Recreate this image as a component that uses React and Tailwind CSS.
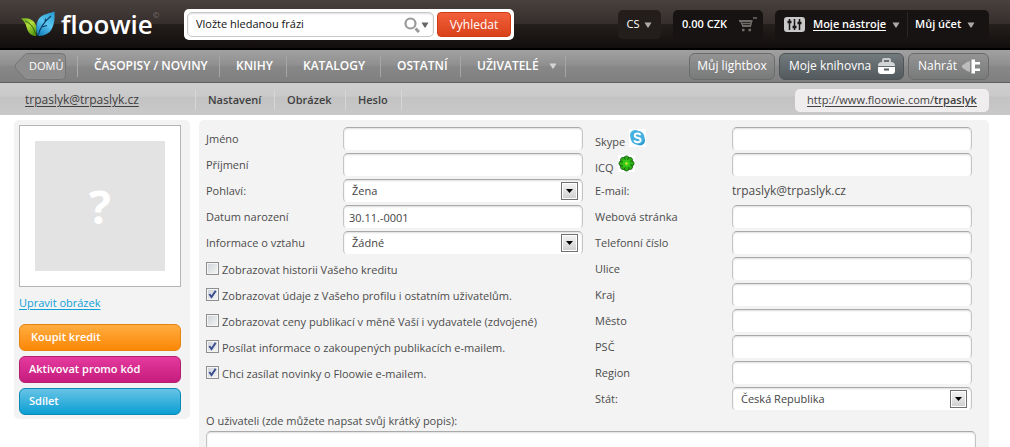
const navItems = [
  { label: "ČASOPISY / NOVINY", width: "w-[142px]" },
  { label: "KNIHY", width: "w-[67px]" },
  { label: "KATALOGY", width: "w-[94px]" },
  { label: "OSTATNÍ", width: "w-[80px]" },
  { label: "UŽIVATELÉ", width: "w-[105px]", menu: true },
];

const tabs = [
  { label: "Nastavení", width: "w-[79px]" },
  { label: "Obrázek", width: "w-[71px]" },
  { label: "Heslo", width: "w-[56px]" },
];

const options = [
  { id: "credit", label: "Zobrazovat historii Vašeho kreditu", checked: false },
  { id: "public", label: "Zobrazovat údaje z Vašeho profilu i ostatním uživatelům.", checked: true },
  { id: "prices", label: "Zobrazovat ceny publikací v měně Vaší i vydavatele (zdvojené)", checked: false },
  { id: "bought", label: "Posílat informace o zakoupených publikacích e-mailem.", checked: true },
  { id: "news", label: "Chci zasílat novinky o Floowie e-mailem.", checked: true },
];

const fieldClass =
  "h-[24px] w-full rounded-[5px] border border-t-[#aaaaaa] border-x-[#c4c4c4] border-b-[#f3f3f3] bg-white text-[11px] text-[#444444] shadow-[inset_0_1px_2px_#dddddd] outline-none";

function Caret({ className }) {
  return (
    <svg viewBox="0 0 8 6" className={`h-[6px] w-[8px] shrink-0 ${className}`} fill="currentColor" aria-hidden="true">
      <path d="M0.500 0.500h7L4.500 5.500h-1z" />
    </svg>
  );
}

function Logo() {
  return (
    <a href="#" className="flex w-[170px] items-center pl-[7px] text-white" aria-label="floowie">
      <svg viewBox="0 0 34 26" className="h-[26px] w-[34px] shrink-0" aria-hidden="true">
        <defs>
          <linearGradient id="green" x1="0" y1="0" x2="0.6" y2="1">
            <stop offset="0" stopColor="#6fae1e" />
            <stop offset="0.5" stopColor="#b2dc3c" />
            <stop offset="1" stopColor="#5c9d12" />
          </linearGradient>
          <linearGradient id="blue" x1="0.8" y1="0" x2="0.3" y2="1">
            <stop offset="0" stopColor="#2a9fd6" />
            <stop offset="0.5" stopColor="#5cc6f0" />
            <stop offset="1" stopColor="#1583c0" />
          </linearGradient>
        </defs>
        <path d="M0 7.500C7 6.500 12 8 14.500 13C16 16.500 15.500 21 15 25C9.500 24.500 7 22 5.500 16C4.500 12 2.500 9.500 0 7.500Z" fill="url(#green)" />
        <path d="M4 10C9 12 13 16 14.500 23.500" fill="none" stroke="#2c5d10" strokeWidth="1" />
        <path d="M33.500 0.500C34 9 33 17 28 21.500C25 24 21 25 17 25C14.500 19 14.500 11 19 6.500C23 3 28 2.500 33.500 0.500Z" fill="url(#blue)" />
        <path d="M30 5C24 10 19 16 17 25M24 11L24.500 7.500M20.500 16L26 14.500" fill="none" stroke="#0d3f66" strokeWidth="1.100" />
      </svg>
      <span className="ml-[6px] text-[26px] leading-[26px] font-semibold">floowie</span>
      <span className="mb-[18px] text-[8px] leading-[8px] text-[#7a716d]">©</span>
    </a>
  );
}

function TopBar() {
  return (
    <header className="flex h-[50px] items-start border-b-2 border-black bg-[linear-gradient(#4a413e_0%,#352e2c_50%,#241f1d_50%,#120e0d_100%)] pr-[21px] pl-[14px] whitespace-nowrap">
      <div className="flex h-[47px] items-center">
        <Logo />
      </div>
      <form className="mt-[9px] flex h-[31px] w-[330px] gap-[3px] rounded-[5px] bg-white p-[3px]">
        <div className="flex min-w-0 flex-1 items-center rounded-[5px] border border-[#c9c9c9] pr-[4px] shadow-[inset_0_1px_2px_#dddddd]">
          <input
            aria-label="Hledat"
            defaultValue="Vložte hledanou frázi"
            className="min-w-0 flex-1 pl-[8px] text-[11px] text-[#111111] outline-none"
          />
          <svg viewBox="0 0 16 16" className="h-[16px] w-[16px]" fill="none" stroke="#999999" aria-hidden="true">
            <circle cx="6.500" cy="6.500" r="5" strokeWidth="2.200" />
            <path d="M11.500 11.500l3.500 3.500" strokeWidth="3" />
          </svg>
          <Caret className="ml-[1px] text-[#666666]" />
        </div>
        <button
          type="button"
          className="w-[74px] rounded-[4px] border border-[#cf3c14] bg-[linear-gradient(#f2603c,#d9421a)] text-[12px] font-medium text-white"
        >
          Vyhledat
        </button>
      </form>
      <div className="mt-[10px] ml-auto flex h-[29px] gap-[12px] text-[11px] font-semibold text-white">
        <button type="button" className="flex w-[43px] items-center justify-center gap-[5px] rounded-[5px] bg-[#231e1c] font-medium">
          CS <Caret className="text-[#aaaaaa]" />
        </button>
        <a href="#" className="flex w-[90px] items-center justify-between rounded-[5px] bg-[#171312] pr-[6px] pl-[9px]">
          0.00 CZK
          <svg viewBox="0 0 18 15" className="h-[15px] w-[18px]" fill="none" stroke="#6f6b69" aria-hidden="true">
            <path d="M18 1h-4" strokeWidth="1.500" />
            <path d="M0 4h13.500M3 9h9" strokeWidth="2" />
            <path d="M1.500 4l2.500 5M12.500 4l-1 5M3 6.500h9" strokeWidth="1.500" />
            <path d="M3 13h2.500M9.500 13h2.500" strokeWidth="2.500" />
          </svg>
        </a>
        <div className="flex w-[214px] items-center rounded-[5px] bg-[#171312] pl-[9px]">
          <svg viewBox="0 0 21 15" className="h-[15px] w-[21px]" aria-hidden="true">
            <rect width="21" height="15" rx="3" fill="#c9c9c9" />
            <path d="M5.500 2v11M10.500 2v11M15.500 2v11" stroke="#1a1615" strokeWidth="1.500" />
            <path d="M3.500 5h4M8.500 10h4M13.500 6h4" stroke="#1a1615" strokeWidth="2.500" />
          </svg>
          <a href="#" className="ml-[8px] underline underline-offset-2">Moje nástroje</a>
          <Caret className="ml-[6px] text-[#aaaaaa]" />
          <span className="mx-[7px] h-[25px] w-px bg-[#2b2624]" />
          <button type="button" className="flex items-center gap-[6px]">
            Můj účet <Caret className="text-[#aaaaaa]" />
          </button>
        </div>
      </div>
    </header>
  );
}

function NavBar() {
  const button = "flex h-[27px] items-center rounded-[6px] border text-[12px] font-medium";
  return (
    <nav className="flex h-[33px] items-center border-b border-[#5e5e5e] bg-[linear-gradient(#a1a1a1_0%,#8f8f8f_48%,#888888_50%,#7e7f7e_100%)] pr-[21px] pl-[14px] whitespace-nowrap text-white">
      <a href="#" className="grid h-[27px] w-[53px] items-center text-[11px]">
        <svg viewBox="0 0 53 27" className="col-start-1 row-start-1 h-[27px] w-[53px]" fill="#8d8d8d" stroke="#747474" aria-hidden="true">
          <path d="M13.500 0.500H47.500Q51.500 0.500 51.500 4.500V22.500Q51.500 26.500 47.500 26.500H13.500Q11.500 26.500 10.500 25L1.500 15.500Q0.500 13.500 1.500 11.500L10.500 2Q11.500 0.500 13.500 0.500Z" />
        </svg>
        <span className="col-start-1 row-start-1 pl-[15px]">DOMŮ</span>
      </a>
      <ul className="ml-[10px] flex border-l border-[#aaaaaa]">
        {navItems.map((item) => (
          <li key={item.label} className={`${item.width} flex h-[22px] items-center border-r border-[#a6a6a6] pl-[16px]`}>
            <a href="#" className="flex items-center gap-[10px] text-[12px] font-semibold">
              {item.label}
              {item.menu && <Caret className="text-[#d5d5d5]" />}
            </a>
          </li>
        ))}
      </ul>
      <div className="ml-auto flex gap-[4px]">
        <button type="button" className={`${button} w-[86px] justify-center border-[#6b6b6b] bg-[linear-gradient(#939393,#787a79)]`}>
          Můj lightbox
        </button>
        <button type="button" className={`${button} w-[125px] justify-between border-[#4f5457] bg-[linear-gradient(#737a7e,#535a5e)] pr-[8px] pl-[9px]`}>
          Moje knihovna
          <svg viewBox="0 0 17 16" className="h-[16px] w-[17px]" aria-hidden="true">
            <path d="M5 4V2Q5 1 6 1H11Q12 1 12 2V4" fill="none" stroke="#c8cccd" strokeWidth="2" />
            <path d="M0 8Q0 4 4 4H13Q17 4 17 8Z" fill="#d3d6d7" />
            <path d="M0 9H17V13Q17 16 14 16H3Q0 16 0 13Z" fill="#ffffff" />
            <path d="M6 11.500H11" stroke="#555c60" strokeWidth="2" />
          </svg>
        </button>
        <button type="button" className={`${button} w-[81px] justify-between border-[#6b6b6b] bg-[linear-gradient(#939393,#787a79)] pr-[8px] pl-[9px]`}>
          Nahrát
          <svg viewBox="0 0 18 15" className="h-[15px] w-[18px]" aria-hidden="true">
            <path d="M0 6.500L5 3Q8 1.500 8 3V12Q8 13.500 5 12L0 8.500Z" fill="#bcbcbc" />
            <path d="M9.500 0.500H13V3H18V5.500H13V9.500H18V12H13V14.500H9.500Z" fill="#ffffff" />
          </svg>
        </button>
      </div>
    </nav>
  );
}

function SubBar() {
  return (
    <div className="flex h-[32px] items-center bg-[linear-gradient(#cecece_0%,#cacaca_40%,#c3c3c3_45%,#c9c9c9_100%)] pt-[2px] pr-[21px] pl-[25px] whitespace-nowrap text-[#3f3f3f]">
      <a href="#" className="w-[170px] text-[12px] underline underline-offset-2">trpaslyk@trpaslyk.cz</a>
      <ul className="flex border-l border-[#d6d6d6]">
        {tabs.map((tab) => (
          <li key={tab.label} className={`${tab.width} flex h-[20px] items-center border-r border-[#d6d6d6] pl-[12px] text-[11px] font-semibold`}>
            <a href="#">{tab.label}</a>
          </li>
        ))}
      </ul>
      <div className="ml-auto flex h-[23px] w-[194px] items-center justify-center rounded-[5px] bg-[#efeded] text-[11px]">
        <a href="#" className="underline underline-offset-2">
          http://www.floowie.com/<span className="font-semibold">trpaslyk</span>
        </a>
      </div>
    </div>
  );
}

function Sidebar() {
  const action = "h-[27px] w-full rounded-[6px] border text-left text-[11px] font-semibold text-white";
  return (
    <aside className="flex w-[176px] shrink-0 flex-col self-start rounded-[5px] bg-[#f3f3f3] pt-[5px] pr-[9px] pb-[4px] pl-[5px]">
      <div className="border border-[#b5b5b5] bg-white p-[15px]">
        <div className="flex h-[130px] items-center justify-center bg-[#e3e3e3] text-[46px] font-bold text-white">?</div>
      </div>
      <a href="#" className="mt-[8px] text-[11px] leading-[16px] font-medium text-[#109fd8] underline underline-offset-2">Upravit obrázek</a>
      <div className="mt-[13px] flex flex-col gap-[5px]">
        <button type="button" className={`${action} border-[#e68310] bg-[linear-gradient(#ffad40,#fb8707)] pl-[11px]`}>Koupit kredit</button>
        <button type="button" className={`${action} border-[#b3206f] bg-[linear-gradient(#e63a9e,#c51c7d)] pl-[9px]`}>Aktivovat promo kód</button>
        <button type="button" className={`${action} border-[#0c88b5] bg-[linear-gradient(#67c3e6,#0b9fd3)] pl-[9px]`}>Sdílet</button>
      </div>
    </aside>
  );
}

function TextField({ id, value = "" }) {
  return <input id={id} type="text" defaultValue={value} className={`${fieldClass} block px-[5px]`} />;
}

function SelectField({ id, value }) {
  return (
    <div className="relative">
      <select id={id} className={`${fieldClass} block appearance-none pl-[8px]`}>
        <option>{value}</option>
      </select>
      <span className="pointer-events-none absolute top-[3px] right-[5px] flex h-[18px] w-[17px] items-center justify-center border border-[#707070] bg-[linear-gradient(#f4f4f4,#cfcfcf)] shadow-[inset_0_0_0_1px_#ffffff]">
        <svg viewBox="0 0 7 4" className="h-[4px] w-[7px]" aria-hidden="true">
          <path d="M0 0h7L3.500 4z" fill="#000000" />
        </svg>
      </span>
    </div>
  );
}

function Row({ id, label, icon, children }) {
  return (
    <div className="flex h-[26px] items-center">
      <label htmlFor={id} className="flex w-[137px] shrink-0 items-center gap-[4px]">
        {icon ? <span className="pt-[6px]">{label}</span> : label}
        {icon}
      </label>
      <div className="w-[240px]">{children}</div>
    </div>
  );
}

function SkypeIcon() {
  return (
    <svg viewBox="0 0 17 18" className="mb-[3px] h-[18px] w-[17px]" aria-hidden="true">
      <rect width="17" height="18" fill="#ffffff" />
      <circle cx="6" cy="6" r="5" fill="#4db8e5" />
      <circle cx="11" cy="11.500" r="5" fill="#2795cc" />
      <circle cx="8.500" cy="8.800" r="7" fill="#45afe0" />
      <path d="M11.500 6.200Q11 4.500 8.500 4.500Q5.700 4.500 5.700 6.500Q5.700 8.200 8.500 8.700Q11.600 9.200 11.600 11Q11.600 13.200 8.600 13.200Q5.800 13.200 5.300 11.300" fill="none" stroke="#ffffff" strokeWidth="1.900" />
    </svg>
  );
}

function IcqIcon() {
  const petals = [0, 45, 90, 135, 180, 225, 270, 315];
  return (
    <svg viewBox="0 0 17 17" className="mb-[4px] h-[17px] w-[17px]" aria-hidden="true">
      <rect width="17" height="17" fill="#ffffff" />
      <circle cx="8.500" cy="8.500" r="6.500" fill="#0b4f08" />
      {petals.map((angle) => (
        <ellipse key={angle} cx="8.500" cy="3.500" rx="2.400" ry="2.600" fill="#2fae16" stroke="#0b4f08" strokeWidth="0.700" transform={`rotate(${angle} 8.500 8.500)`} />
      ))}
      <circle cx="8.500" cy="8.500" r="4" fill="#35c91a" />
      <circle cx="8.500" cy="8.500" r="1.300" fill="#d5e62c" />
    </svg>
  );
}

function Option({ id, label, checked }) {
  return (
    <div className="flex h-[26px] items-center gap-[3px] pb-[2px]">
      <span className="grid h-[13px] w-[13px] shrink-0">
        <input
          id={id}
          type="checkbox"
          defaultChecked={checked}
          className="peer col-start-1 row-start-1 h-[13px] w-[13px] appearance-none border border-[#8e8f8f] bg-[linear-gradient(135deg,#cdd2d8,#f6f6f6)] shadow-[inset_0_0_0_1px_#f4f4f4]"
        />
        <svg viewBox="0 0 13 13" className="pointer-events-none invisible col-start-1 row-start-1 h-[13px] w-[13px] peer-checked:visible" fill="none" aria-hidden="true">
          <path d="M3.300 6L5.500 9L9.700 2.800" stroke="#3c4f8f" strokeWidth="2" />
        </svg>
      </span>
      <label htmlFor={id} className="pt-[3px]">{label}</label>
    </div>
  );
}

function ProfileForm() {
  return (
    <form className="flex min-w-0 flex-1 flex-col rounded-t-[5px] bg-[#f3f3f3] pt-[6px] pr-[13px] pl-[7px] text-[11px] leading-[16px] whitespace-nowrap text-[#4c4c4c]">
      <div className="flex justify-between pr-[4px]">
        <div>
          <Row id="first" label="Jméno"><TextField id="first" /></Row>
          <Row id="last" label="Příjmení"><TextField id="last" /></Row>
          <Row id="sex" label="Pohlaví:"><SelectField id="sex" value="Žena" /></Row>
          <Row id="birth" label="Datum narození"><TextField id="birth" value="30.11.-0001" /></Row>
          <Row id="relation" label="Informace o vztahu"><SelectField id="relation" value="Žádné" /></Row>
          {options.map((option) => (
            <Option key={option.id} {...option} />
          ))}
        </div>
        <div>
          <Row id="skype" label="Skype" icon={<SkypeIcon />}><TextField id="skype" /></Row>
          <Row id="icq" label="ICQ" icon={<IcqIcon />}><TextField id="icq" /></Row>
          <div className="flex h-[26px] items-center">
            <span className="w-[137px]">E-mail:</span>
            <span className="text-[12px]">trpaslyk@trpaslyk.cz</span>
          </div>
          <Row id="web" label="Webová stránka"><TextField id="web" /></Row>
          <Row id="phone" label="Telefonní číslo"><TextField id="phone" /></Row>
          <Row id="street" label="Ulice"><TextField id="street" /></Row>
          <Row id="region" label="Kraj"><TextField id="region" /></Row>
          <Row id="city" label="Město"><TextField id="city" /></Row>
          <Row id="zip" label="PSČ"><TextField id="zip" /></Row>
          <Row id="area" label="Region"><TextField id="area" /></Row>
          <Row id="country" label="Stát:"><SelectField id="country" value="Česká Republika" /></Row>
        </div>
      </div>
      <label htmlFor="about" className="mt-[1px]">O uživateli (zde můžete napsat svůj krátký popis):</label>
      <textarea
        id="about"
        rows={1}
        className="mt-[2px] min-h-[16px] w-full flex-1 resize-none rounded-t-[5px] border border-b-0 border-t-[#aaaaaa] border-x-[#c4c4c4] bg-white shadow-[inset_0_1px_2px_#dddddd] outline-none"
      />
    </form>
  );
}

export default function App() {
  return (
    <div className="flex min-h-screen flex-col bg-white font-['Open_Sans','Noto_Sans',sans-serif]">
      <TopBar />
      <NavBar />
      <SubBar />
      <main className="flex flex-1 gap-[9px] pt-[5px] pr-[21px] pl-[14px]">
        <Sidebar />
        <ProfileForm />
      </main>
    </div>
  );
}
